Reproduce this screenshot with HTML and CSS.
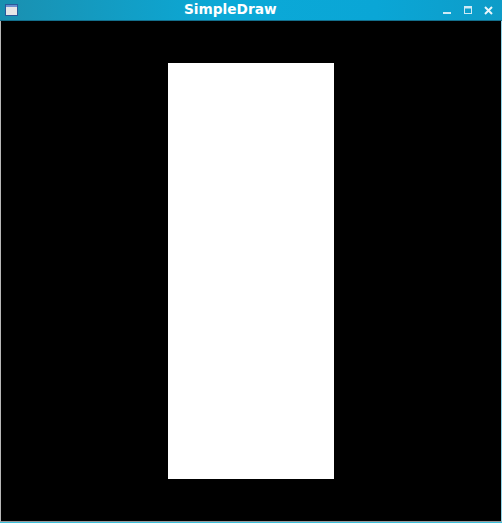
FILE: index.html
```html
<!DOCTYPE html>
<html>
<head>
<meta charset="utf-8">
<link rel="stylesheet" href="styles.css">
</head>
<body>
<div class="window">
  <div class="titlebar">
    <div class="app-icon"><svg width="13" height="12" viewBox="0 0 13 12"><rect x="0.5" y="0.5" width="12" height="11" fill="#e6e6e6" stroke="#2a5a9a"/><rect x="1" y="1" width="11" height="2" fill="#6a8fd0"/></svg></div>
    <div class="title">SimpleDraw</div>
    <div class="controls">
      <svg class="min" width="9" height="9" viewBox="0 0 9 9"><rect x="0" y="6" width="8" height="2" fill="#cfeaf5"/></svg>
      <svg width="9" height="9" viewBox="0 0 9 9"><rect x="0.5" y="0.5" width="7" height="7" fill="none" stroke="#cfeaf5"/><rect x="1" y="1" width="6" height="1.5" fill="#cfeaf5"/></svg>
      <svg width="9" height="9" viewBox="0 0 9 9"><path d="M1 1 L8 8 M8 1 L1 8" stroke="#e8f6fb" stroke-width="2"/></svg>
    </div>
  </div>
  <div class="canvas">
    <div class="shape"></div>
  </div>
</div>
</body>
</html>
```
FILE: styles.css
```css
html, body { margin: 0; padding: 0; background: #000; }
.window {
  width: 502px;
  height: 523px;
  display: flex;
  flex-direction: column;
  box-sizing: border-box;
  border-bottom: 1px solid #3cc0dc;
  font-family: "DejaVu Sans", sans-serif;
}
.titlebar {
  height: 20px;
  border-bottom: 1px solid #136f8c;
  background: linear-gradient(to right, #1a90b0, #0ba9d7 45%, #0aa6d6 75%, #0e9cc8);
  display: flex;
  align-items: center;
  position: relative;
  flex: none;
}
.app-icon { width: 13px; height: 12px; margin-left: 5px; display: flex; }
.title {
  position: absolute;
  left: 184px;
  top: 1px;
  color: #fff;
  font-weight: bold;
  font-size: 13.7px;
  line-height: 16px;
}
.controls {
  margin-left: auto;
  margin-right: 9px;
  display: flex;
  gap: 11px;
  align-items: center;
  margin-top: 1px;
}
.controls svg { display: block; }
.controls .min { margin-right: 1px; }
.canvas {
  flex: 1;
  background: #000;
  border-left: 1px solid #b8b8b8;
  border-right: 1px solid #8fd3e6;
  border-bottom: 1px solid #9a9a9a;
  padding: 42px 0 0 167px;
}
.shape {
  width: 166px;
  height: 416px;
  background: #fff;
}
```
